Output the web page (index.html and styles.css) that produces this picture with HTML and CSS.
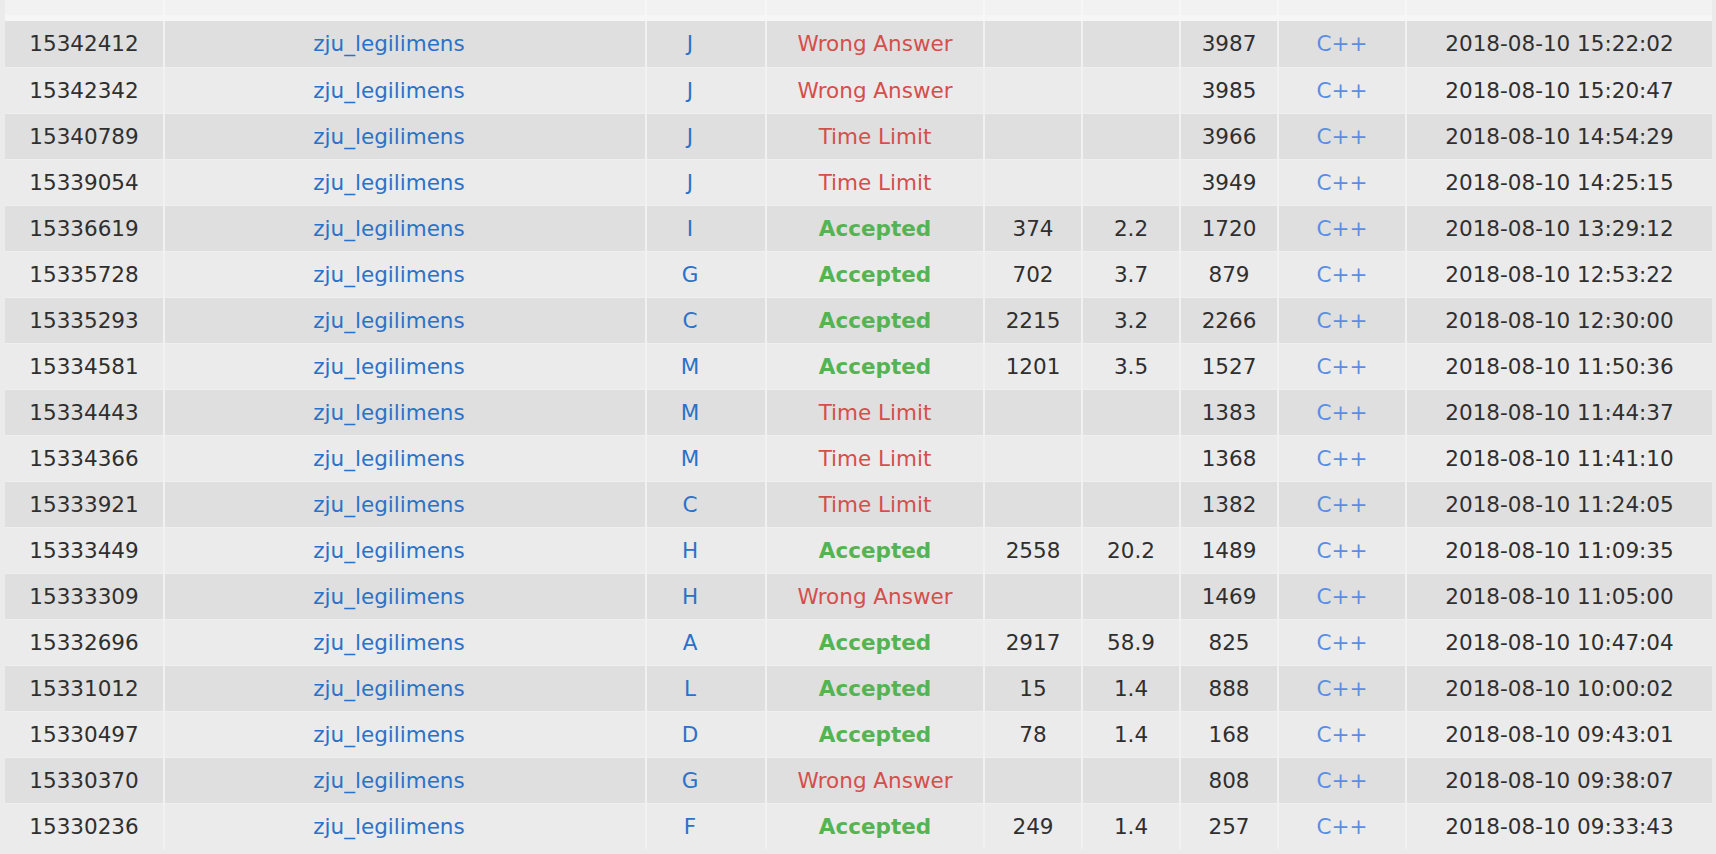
FILE: index.html
```html
<!DOCTYPE html>
<html>
<head>
<meta charset="utf-8">
<title>Status</title>
<link rel="stylesheet" href="styles.css">
</head>
<body>
<div class="page">
<table class="status">
<colgroup>
<col class="c-id"><col class="c-user"><col class="c-prob"><col class="c-res"><col class="c-time"><col class="c-mem"><col class="c-len"><col class="c-lang"><col class="c-date">
</colgroup>
<thead>
<tr class="hd"><th></th><th></th><th></th><th></th><th></th><th></th><th></th><th></th><th></th></tr>
</thead>
<tbody>
<tr><td>15342412</td><td class="user"><a>zju_legilimens</a></td><td class="prob"><a>J</a></td><td class="wa">Wrong Answer</td><td></td><td></td><td>3987</td><td class="lang">C++</td><td>2018-08-10 15:22:02</td></tr>
<tr><td>15342342</td><td class="user"><a>zju_legilimens</a></td><td class="prob"><a>J</a></td><td class="wa">Wrong Answer</td><td></td><td></td><td>3985</td><td class="lang">C++</td><td>2018-08-10 15:20:47</td></tr>
<tr><td>15340789</td><td class="user"><a>zju_legilimens</a></td><td class="prob"><a>J</a></td><td class="wa">Time Limit</td><td></td><td></td><td>3966</td><td class="lang">C++</td><td>2018-08-10 14:54:29</td></tr>
<tr><td>15339054</td><td class="user"><a>zju_legilimens</a></td><td class="prob"><a>J</a></td><td class="wa">Time Limit</td><td></td><td></td><td>3949</td><td class="lang">C++</td><td>2018-08-10 14:25:15</td></tr>
<tr><td>15336619</td><td class="user"><a>zju_legilimens</a></td><td class="prob"><a>I</a></td><td class="ac">Accepted</td><td>374</td><td>2.2</td><td>1720</td><td class="lang">C++</td><td>2018-08-10 13:29:12</td></tr>
<tr><td>15335728</td><td class="user"><a>zju_legilimens</a></td><td class="prob"><a>G</a></td><td class="ac">Accepted</td><td>702</td><td>3.7</td><td>879</td><td class="lang">C++</td><td>2018-08-10 12:53:22</td></tr>
<tr><td>15335293</td><td class="user"><a>zju_legilimens</a></td><td class="prob"><a>C</a></td><td class="ac">Accepted</td><td>2215</td><td>3.2</td><td>2266</td><td class="lang">C++</td><td>2018-08-10 12:30:00</td></tr>
<tr><td>15334581</td><td class="user"><a>zju_legilimens</a></td><td class="prob"><a>M</a></td><td class="ac">Accepted</td><td>1201</td><td>3.5</td><td>1527</td><td class="lang">C++</td><td>2018-08-10 11:50:36</td></tr>
<tr><td>15334443</td><td class="user"><a>zju_legilimens</a></td><td class="prob"><a>M</a></td><td class="wa">Time Limit</td><td></td><td></td><td>1383</td><td class="lang">C++</td><td>2018-08-10 11:44:37</td></tr>
<tr><td>15334366</td><td class="user"><a>zju_legilimens</a></td><td class="prob"><a>M</a></td><td class="wa">Time Limit</td><td></td><td></td><td>1368</td><td class="lang">C++</td><td>2018-08-10 11:41:10</td></tr>
<tr><td>15333921</td><td class="user"><a>zju_legilimens</a></td><td class="prob"><a>C</a></td><td class="wa">Time Limit</td><td></td><td></td><td>1382</td><td class="lang">C++</td><td>2018-08-10 11:24:05</td></tr>
<tr><td>15333449</td><td class="user"><a>zju_legilimens</a></td><td class="prob"><a>H</a></td><td class="ac">Accepted</td><td>2558</td><td>20.2</td><td>1489</td><td class="lang">C++</td><td>2018-08-10 11:09:35</td></tr>
<tr><td>15333309</td><td class="user"><a>zju_legilimens</a></td><td class="prob"><a>H</a></td><td class="wa">Wrong Answer</td><td></td><td></td><td>1469</td><td class="lang">C++</td><td>2018-08-10 11:05:00</td></tr>
<tr><td>15332696</td><td class="user"><a>zju_legilimens</a></td><td class="prob"><a>A</a></td><td class="ac">Accepted</td><td>2917</td><td>58.9</td><td>825</td><td class="lang">C++</td><td>2018-08-10 10:47:04</td></tr>
<tr><td>15331012</td><td class="user"><a>zju_legilimens</a></td><td class="prob"><a>L</a></td><td class="ac">Accepted</td><td>15</td><td>1.4</td><td>888</td><td class="lang">C++</td><td>2018-08-10 10:00:02</td></tr>
<tr><td>15330497</td><td class="user"><a>zju_legilimens</a></td><td class="prob"><a>D</a></td><td class="ac">Accepted</td><td>78</td><td>1.4</td><td>168</td><td class="lang">C++</td><td>2018-08-10 09:43:01</td></tr>
<tr><td>15330370</td><td class="user"><a>zju_legilimens</a></td><td class="prob"><a>G</a></td><td class="wa">Wrong Answer</td><td></td><td></td><td>808</td><td class="lang">C++</td><td>2018-08-10 09:38:07</td></tr>
<tr><td>15330236</td><td class="user"><a>zju_legilimens</a></td><td class="prob"><a>F</a></td><td class="ac">Accepted</td><td>249</td><td>1.4</td><td>257</td><td class="lang">C++</td><td>2018-08-10 09:33:43</td></tr>
</tbody>
</table>
</div>
</body>
</html>
```

FILE: styles.css
```css
html, body {
  margin: 0;
  padding: 0;
  background: #ebebeb;
}

body {
  font-family: "DejaVu Sans", Verdana, sans-serif;
  font-size: 21.5px;
  color: #2f2f2f;
  overflow: hidden;
}

.page {
  padding: 0 4px 0 5px;
}

.status {
  width: 1707px;
  table-layout: fixed;
  border-collapse: separate;
  border-spacing: 0;
}

.c-id { width: 158px; }
.c-user { width: 482px; }
.c-prob { width: 120px; }
.c-res { width: 218px; }
.c-time { width: 98px; }
.c-mem { width: 98px; }
.c-len { width: 98px; }
.c-lang { width: 128px; }
.c-date { width: 307px; }

.hd th {
  height: 15px;
  padding: 0;
  background: #f2f2f2;
  border-left: 2px solid #f7f7f7;
  border-bottom: 6px solid #f6f6f6;
}

.hd th:first-child {
  border-left: none;
}

.status td {
  height: 45px;
  padding: 0;
  text-align: center;
  vertical-align: middle;
  white-space: nowrap;
  border-left: 2px solid #f1f1f1;
  border-top: 1px solid #efefef;
  line-height: 1;
}

.status tbody tr:first-child td {
  border-top: none;
  height: 46px;
}

.status td:first-child {
  border-left: none;
}

.status tbody tr:nth-child(odd) td {
  background: #dfdfdf;
}

.status tbody tr:nth-child(even) td {
  background: #ebebeb;
}

.user,
.prob {
  padding-right: 32px !important;
}

.user a,
.prob a {
  color: #2a72c9;
}

.lang {
  color: #5a8ee6;
}

.wa {
  color: #d64e4c;
}

.ac {
  color: #55b351;
  font-weight: bold;
}
```
